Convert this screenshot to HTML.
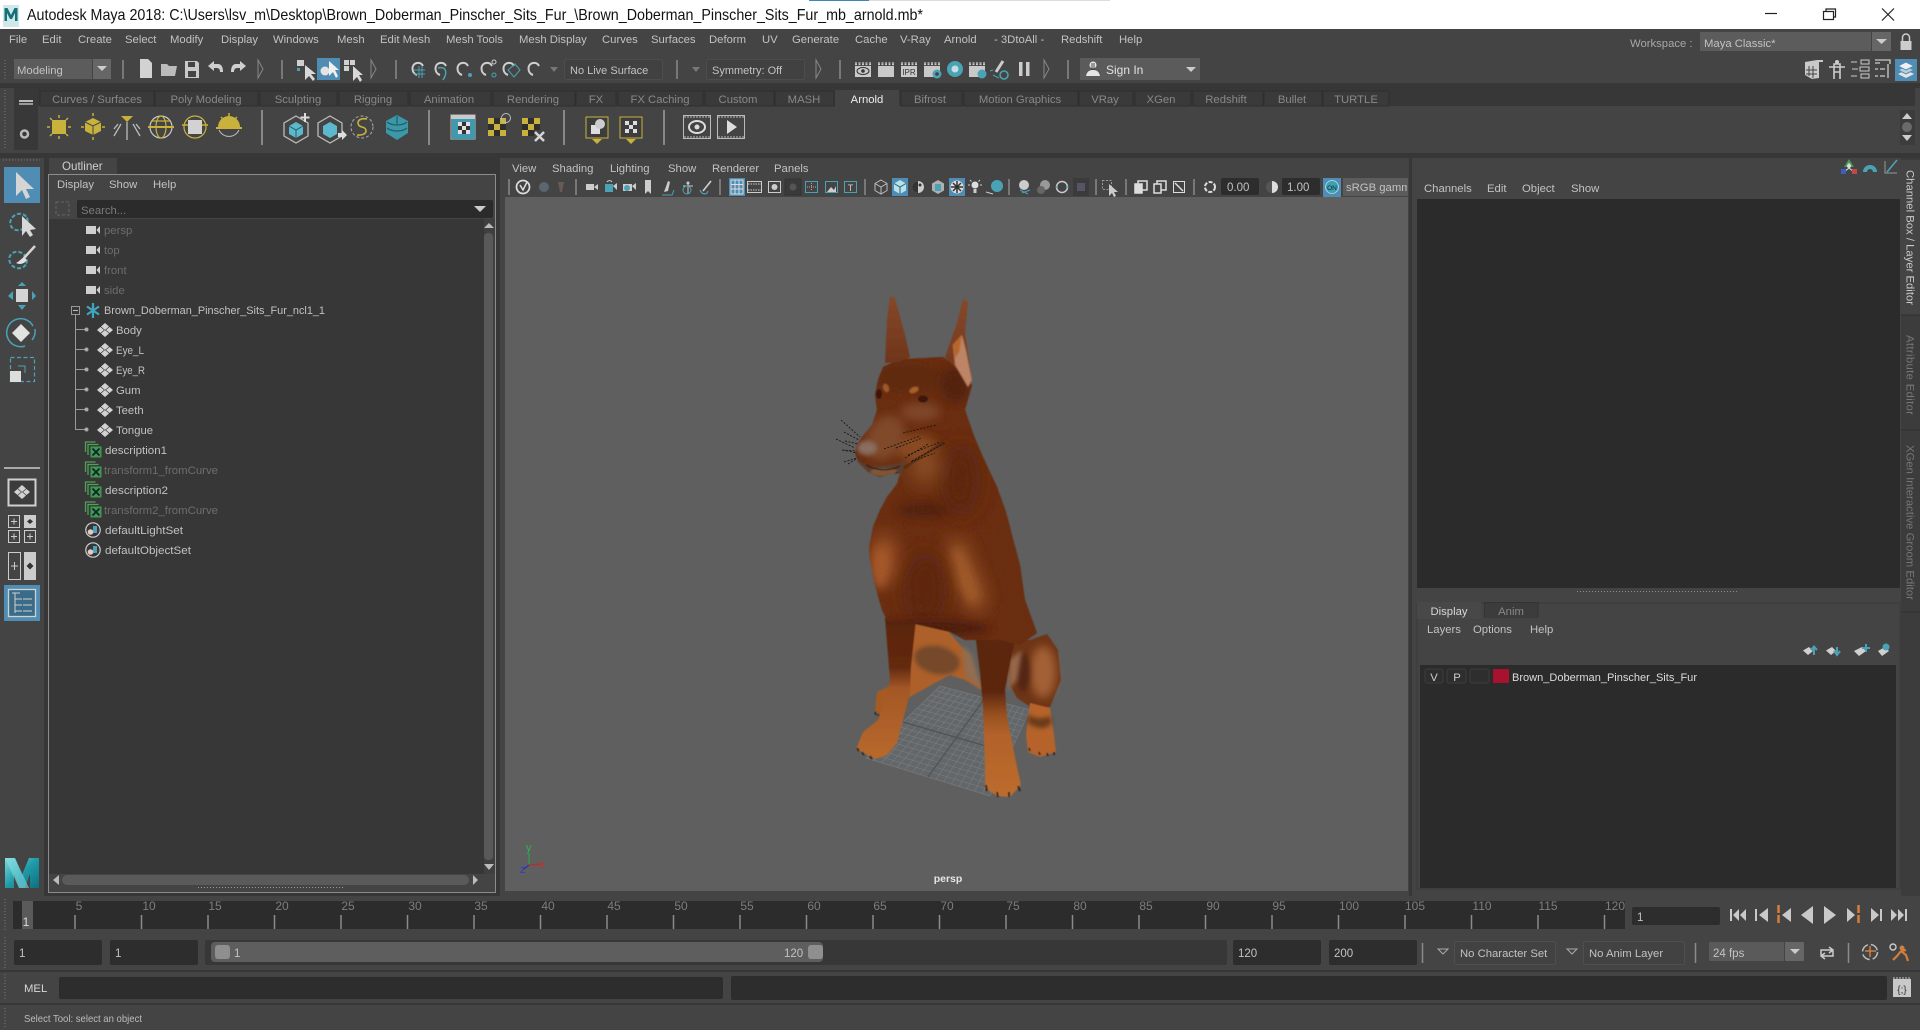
<!DOCTYPE html>
<html><head><meta charset="utf-8"><title>Autodesk Maya 2018</title>
<style>
html,body{margin:0;padding:0;width:1920px;height:1030px;overflow:hidden;background:#373737}
svg{display:block}
text{font-family:"Liberation Sans",sans-serif;font-size:11.3px;fill:#c2c2c2}
.m{text-anchor:middle}
.d{fill:#888}
.g{fill:#6d6d6d}
.w{fill:#e4e4e4}
.sp{stroke:#8a8a8a;stroke-width:1.5;fill:none}
.lg{fill:#c9c9c9}
.ol{fill:none;stroke:#c9c9c9;stroke-width:1.2}
.ye{fill:#c8b23c}
.yo{fill:none;stroke:#c8b23c;stroke-width:1.2}
.te{fill:#4aa3b5}
.to{fill:none;stroke:#4aa3b5;stroke-width:1.2}
.tick{stroke:#8a8a8a;stroke-width:1.5}
.tl{fill:#7e7e7e;font-size:12px;text-anchor:middle}
</style></head><body>
<svg xmlns="http://www.w3.org/2000/svg" width="1920" height="1030" viewBox="0 0 1920 1030">
<defs>
<linearGradient id="lg1" x1="0" y1="0" x2="1" y2="1"><stop offset="0" stop-color="#7fdbe0"/><stop offset=".5" stop-color="#1f9aa8"/><stop offset="1" stop-color="#0e6f80"/></linearGradient>
<linearGradient id="legR" x1="0" y1="0" x2="0" y2="1"><stop offset="0" stop-color="#5a2510"/><stop offset=".36" stop-color="#5c2610"/><stop offset=".5" stop-color="#98501f"/><stop offset=".62" stop-color="#b2622a"/><stop offset="1" stop-color="#bd6c2e"/></linearGradient>
<linearGradient id="legL" x1="0" y1="0" x2="0" y2="1"><stop offset="0" stop-color="#58240f"/><stop offset=".35" stop-color="#642a11"/><stop offset=".5" stop-color="#a35826"/><stop offset="1" stop-color="#b8692c"/></linearGradient>
<linearGradient id="ear" x1="0" y1="0" x2="0" y2="1"><stop offset="0" stop-color="#85482a"/><stop offset="1" stop-color="#6f351a"/></linearGradient>
<filter id="b05" x="-10%" y="-10%" width="120%" height="120%"><feGaussianBlur stdDeviation=".6"/></filter>
<filter id="b1" x="-40%" y="-40%" width="180%" height="180%"><feGaussianBlur stdDeviation="2"/></filter>
<filter id="b3" x="-80%" y="-80%" width="260%" height="260%"><feGaussianBlur stdDeviation="4.500"/></filter>
<filter id="b6" x="-100%" y="-100%" width="300%" height="300%"><feGaussianBlur stdDeviation="9"/></filter>
<filter id="noise" x="0" y="0" width="100%" height="100%"><feTurbulence type="fractalNoise" baseFrequency="0.4" numOctaves="2" seed="4"/><feColorMatrix values="0 0 0 0 .18  0 0 0 0 .07  0 0 0 0 .03  0 0 0 1.2 -.5"/></filter>
<clipPath id="torso"><path id="torsoP" d="M883,367L900,359L925,358L943,357L955,365L972,385L965,410L974,436L983,457L997,487L1006,512L1012,535L1020,565L1025,600L1037,633L1020,645L1000,640L965,640L950,632L915,624L888,622L882,610L875,585L870,560L869,548L873,527L880,510L887,497L897,484L900,473L890,474L880,477L868,472L858,462L855,453L857,445L862,437L872,425L877,410L875,395L878,380Z"/></clipPath>
<clipPath id="vp"><rect x="505" y="197" width="903" height="694"/></clipPath>
<clipPath id="srgb"><rect x="1343" y="178" width="64" height="18"/></clipPath>
<symbol id="cam" overflow="visible"><rect x="0" y="-4" width="10" height="8" fill="#cfcfcf"/><path d="M10.500 0L14 -4V4Z" fill="#cfcfcf"/></symbol>
<symbol id="tf" overflow="visible"><g fill="#d2d2d2"><path d="M8 -7L12 -3.500L8 0L4 -3.500Z"/><path d="M8 0L12 3.500L8 7L4 3.500Z"/><path d="M3.500 -3L7 0L3.500 3L0 0Z"/><path d="M12.500 -3L16 0L12.500 3L9 0Z"/></g></symbol>
<symbol id="xg" overflow="visible"><g fill="none" stroke="#4fa05a" stroke-width="1.300"><path d="M0 2V-8H10"/><path d="M2.500 5V-5.500H13"/></g><rect x="5" y="-3.500" width="11" height="11" fill="#3f9a4c"/><path d="M7 -1.500L14 5.500M14 -1.500L7 5.500" stroke="#123" stroke-width="1.800"/></symbol>
<symbol id="st" overflow="visible"><circle cx="8" cy="0" r="7.200" fill="none" stroke="#cfcfcf" stroke-width="1.200"/><path d="M8 -4L12 -4V3H8Z" fill="#4aa3b5"/><circle cx="5.500" cy="2" r="2.800" fill="#e6c8c8"/></symbol>
<symbol id="snap" overflow="visible"><path d="M5 5C-1 3 -1 -6 5 -7C8 -7.500 10 -6 11 -4" fill="none" stroke="#cfcfcf" stroke-width="2"/></symbol>
<symbol id="clap" overflow="visible"><rect x="-8" y="-4" width="16" height="11" fill="#c9c9c9"/><path d="M-8 -7H8M-8 -5.500H8" stroke="#c9c9c9" stroke-dasharray="2 1.500" stroke-width="1.200"/></symbol>
</defs>

<rect width="1920" height="1030" fill="#373737"/>
<rect width="1920" height="29" fill="#fff"/>
<rect x="809" y="0" width="60" height="1" fill="#3a88b8"/><rect x="869" y="0" width="241" height="1" fill="#dcdcdc"/>
<rect x="3" y="5" width="16" height="22" fill="#cfe8ea"/>
<path d="M4.500 21V8H7.500L11 15L14.500 8H17.500V21H15V13L12 19H10L7 13V21Z" fill="#15707c"/>
<text x="27" y="20" textLength="896" lengthAdjust="spacingAndGlyphs" style="font-size:16px;fill:#111">Autodesk Maya 2018: C:\Users\lsv_m\Desktop\Brown_Doberman_Pinscher_Sits_Fur_\Brown_Doberman_Pinscher_Sits_Fur_mb_arnold.mb*</text>
<path d="M1765 13.500H1777" stroke="#222" stroke-width="1.200"/>
<path d="M1823.500 11.500H1833.500V19.500H1823.500ZM1826 11V9H1835.500V17H1833.500" fill="none" stroke="#222" stroke-width="1.200"/>
<path d="M1882 8.500L1894 20.500M1894 8.500L1882 20.500" stroke="#222" stroke-width="1.200"/>

<rect y="29" width="1920" height="54" fill="#444"/>
<text x="9" y="43">File</text><text x="42" y="43">Edit</text><text x="78" y="43">Create</text><text x="125" y="43">Select</text><text x="170" y="43">Modify</text><text x="221" y="43">Display</text><text x="273" y="43">Windows</text><text x="337" y="43">Mesh</text><text x="380" y="43">Edit Mesh</text><text x="446" y="43">Mesh Tools</text><text x="519" y="43">Mesh Display</text><text x="602" y="43">Curves</text><text x="651" y="43">Surfaces</text><text x="709" y="43">Deform</text><text x="762" y="43">UV</text><text x="792" y="43">Generate</text><text x="855" y="43">Cache</text><text x="900" y="43">V-Ray</text><text x="944" y="43">Arnold</text><text x="994" y="43">- 3DtoAll -</text><text x="1061" y="43">Redshift</text><text x="1119" y="43">Help</text>
<text x="1630" y="47" style="fill:#a8a8a8">Workspace :</text>
<rect x="1700" y="32" width="171" height="19" fill="#5c5c5c"/><rect x="1872" y="32" width="19" height="19" fill="#666"/>
<text x="1704" y="47">Maya Classic*</text>
<path d="M1876 39H1887L1881.500 44Z" fill="#ccc"/>
<path d="M1902.500 41V37.500A3.500 3.500 0 0 1 1909.500 37.500V41" fill="none" stroke="#ccc" stroke-width="1.500"/><rect x="1900.500" y="41" width="11" height="9" fill="#ccc"/>

<path d="M5 60V80" stroke="#777" stroke-dasharray="1 2"/>
<rect x="14" y="59" width="78" height="20" fill="#5c5c5c"/><rect x="93" y="59" width="18" height="20" fill="#666"/>
<text x="17" y="74" style="font-size:11.300px">Modeling</text><path d="M97 66H107L102 71Z" fill="#ccc"/>
<path class="sp" d="M123 60V79"/>
<path d="M140 59H148L152 63V78H140Z" fill="#d2d2d2"/>
<path d="M161 76V64H167L169 66H177L175 76Z" fill="#bbb"/>
<path d="M185 61H197L199 63V78H185ZM188 62V67H195V62ZM188 71V77H196V71Z" fill="#c9c9c9" fill-rule="evenodd"/>
<path d="M208 66L214 61V64H218C222 64 223 68 223 72H220C220 69 219 68 216 68H214V71Z" fill="#cfcfcf"/>
<path d="M246 66L240 61V64H236C232 64 231 68 231 72H234C234 69 235 68 238 68H240V71Z" fill="#cfcfcf"/>
<path d="M258 60L263 69L258 78Z" fill="none" stroke="#888"/>
<path class="sp" d="M282 60V79"/>
<g><rect x="297" y="60" width="7" height="6" fill="#cfcfcf"/><rect x="297" y="68" width="3" height="3" fill="#4aa3b5"/><path d="M305 65L305 80L309 76L313 81L315 79L311 74H316Z" fill="#d8d8d8"/></g>
<rect x="317" y="58" width="23" height="22" fill="#4f8db5"/><circle cx="325" cy="71" r="4.500" fill="#e4e4e4"/><path d="M329 61L329 76L333 72L336 78L338 76L335 70H339Z" fill="#f0f0f0"/>
<g><rect x="344" y="60" width="5" height="5" fill="#d0d0d0"/><rect x="350" y="60" width="5" height="5" fill="#d0d0d0"/><rect x="344" y="66" width="5" height="5" fill="#d0d0d0"/><path d="M353 66L353 81L357 77L360 82L362 80L359 75H363Z" fill="#d8d8d8"/></g>
<path d="M371 60L376 69L371 78Z" fill="none" stroke="#888"/>
<path class="sp" d="M396 60V79"/>
<use href="#snap" x="412" y="70"/><path d="M419 66V78M414 70H425M414 74H425M422 66V78" stroke="#4aa3b5" fill="none"/>
<use href="#snap" x="435" y="70"/><path d="M438 68C446 66 448 72 443 80" stroke="#4aa3b5" fill="none" stroke-width="1.500"/>
<use href="#snap" x="457" y="70"/><circle cx="470" cy="75" r="2" fill="#4aa3b5"/>
<use href="#snap" x="481" y="70"/><circle cx="494" cy="62" r="2" fill="none" stroke="#ccc"/><circle cx="494" cy="75" r="2" fill="none" stroke="#4aa3b5"/>
<use href="#snap" x="503" y="70"/><path d="M508 70L515 64L520 70L514 77Z" fill="none" stroke="#4aa3b5"/>
<use href="#snap" x="528" y="70"/>
<path d="M550 67H558L554 72Z" fill="#777"/>
<rect x="564.500" y="59.500" width="98" height="20" rx="2" fill="#414141" stroke="#4d4d4d"/><text x="570" y="74" style="font-size:11px">No Live Surface</text>
<path class="sp" d="M677 60V79"/><path d="M692 67H700L696 72Z" fill="#777"/>
<rect x="706.500" y="59.500" width="98" height="20" rx="2" fill="#414141" stroke="#4d4d4d"/><text x="712" y="74" style="font-size:11px">Symmetry: Off</text>
<path d="M816 60L821 69L816 78Z" fill="none" stroke="#888"/>
<path class="sp" d="M840 60V79"/>
<use href="#clap" x="863" y="70"/><ellipse cx="863" cy="71" rx="6" ry="3.500" fill="none" stroke="#333"/><circle cx="863" cy="71" r="1.800" fill="#333"/>
<use href="#clap" x="886" y="70"/>
<use href="#clap" x="909" y="70"/><text x="909" y="75" class="m" style="font-size:8px;fill:#333">IPR</text>
<use href="#clap" x="932" y="70"/><circle cx="937" cy="74" r="4.500" fill="#4aa3b5"/><circle cx="937" cy="74" r="1.800" fill="#444"/>
<circle cx="955" cy="69" r="8" fill="#4aa3b5"/><circle cx="955" cy="69" r="3.500" fill="#c4dfe4"/>
<use href="#clap" x="977" y="70"/><circle cx="982" cy="74" r="4.500" fill="#4aa3b5"/>
<path d="M1003 61L996 72" stroke="#ccc" stroke-width="3"/><circle cx="1004" cy="75" r="4" fill="none" stroke="#4aa3b5" stroke-width="1.600"/><path d="M993 75L999 78M993 70L990 71" stroke="#4aa3b5"/>
<rect x="1019" y="62" width="3.500" height="14" fill="#ccc"/><rect x="1026" y="62" width="3.500" height="14" fill="#ccc"/>
<path d="M1044 60L1049 69L1044 78Z" fill="none" stroke="#888"/>
<path class="sp" d="M1068 60V79"/>
<rect x="1080" y="58" width="120" height="22" fill="#5b5b5b"/>
<circle cx="1093" cy="65" r="3.500" fill="#e6e6e6"/><path d="M1086 76C1087 71 1090 70 1093 70C1096 70 1099 71 1100 76Z" fill="#e6e6e6"/><path d="M1091 63H1095V70H1091Z" fill="#222" opacity=".4"/>
<text x="1106" y="74" style="font-size:12px;fill:#e2e2e2">Sign In</text><path d="M1186 67H1196L1191 72Z" fill="#ccc"/>
<path d="M1805 62L1817 60H1823V62H1819V78L1812 79L1805 75Z" fill="#c9c9c9"/><path d="M1809 66V76M1813 66V78M1806 70H1817M1806 74H1817" stroke="#444"/>
<circle cx="1837" cy="62" r="2" fill="#ccc"/><path d="M1829 67H1845M1834 64H1840V72H1834ZM1834 72V79M1840 72V79" stroke="#ccc" fill="none" stroke-width="1.600"/>
<path d="M1851 62H1857M1861 60H1869V64H1861ZM1852 69H1858M1860 67H1869V71H1860ZM1851 76H1857M1861 74H1869V78H1861Z" stroke="#ccc" fill="none"/>
<path d="M1875 60H1890V64M1888 64V78M1875 63H1880M1875 69H1878M1880 69H1885M1875 76H1878M1880 76H1885" stroke="#ccc" fill="none" stroke-width="1.300"/>
<rect x="1895" y="59" width="22" height="22" fill="#4f8db5"/><path d="M1898 74L1906 78L1914 74L1906 70Z" fill="#e4e4e4"/><path d="M1898 70L1906 74L1914 70L1906 66Z" fill="#bcd" stroke="#4f8db5"/><path d="M1898 66L1906 70L1914 66L1906 62Z" fill="#f0f0f0" stroke="#4f8db5"/>

<rect y="83" width="1920" height="5" fill="#373737"/>
<rect y="88" width="1920" height="65" fill="#444"/>
<rect x="14" y="88" width="1901" height="18" fill="#373737"/>
<rect x="14" y="88" width="24" height="62" fill="#383838"/>
<path d="M5 90V150" stroke="#777" stroke-dasharray="1 2"/>
<rect x="19" y="100" width="14" height="2" fill="#bbb"/><rect x="19" y="103" width="14" height="2" fill="#999"/>
<circle cx="24.500" cy="134" r="3.500" fill="none" stroke="#bbb" stroke-width="2.500"/>
<g fill="#3a3a3a" stroke="#2f2f2f">
<path d="M40 106V91H154V106Z"/><path d="M155 106V91H258V106Z"/><path d="M260 106V91H337V106Z"/><path d="M339 106V91H408V106Z"/><path d="M410 106V91H491V106Z"/><path d="M493 106V91H575V106Z"/><path d="M576 106V91H616V106Z"/><path d="M618 106V91H703V106Z"/><path d="M705 106V91H774V106Z"/><path d="M775 106V91H834V106Z"/><path d="M901 106V91H962V106Z"/><path d="M964 106V91H1078V106Z"/><path d="M1079 106V91H1133V106Z"/><path d="M1135 106V91H1191V106Z"/><path d="M1193 106V91H1263V106Z"/><path d="M1264 106V91H1322V106Z"/><path d="M1323 106V91H1389V106Z"/>
</g>
<rect x="835" y="90" width="64" height="17" fill="#444"/>
<g>
<text class="m d" x="97" y="103">Curves / Surfaces</text><text class="m d" x="206" y="103">Poly Modeling</text><text class="m d" x="298" y="103">Sculpting</text><text class="m d" x="373" y="103">Rigging</text><text class="m d" x="449" y="103">Animation</text><text class="m d" x="533" y="103">Rendering</text><text class="m d" x="596" y="103">FX</text><text class="m d" x="660" y="103">FX Caching</text><text class="m d" x="738" y="103">Custom</text><text class="m d" x="804" y="103">MASH</text><text class="m" x="867" y="103" style="fill:#eee">Arnold</text><text class="m d" x="930" y="103">Bifrost</text><text class="m d" x="1020" y="103">Motion Graphics</text><text class="m d" x="1105" y="103">VRay</text><text class="m d" x="1161" y="103">XGen</text><text class="m d" x="1226" y="103">Redshift</text><text class="m d" x="1292" y="103">Bullet</text><text class="m d" x="1356" y="103">TURTLE</text>
</g>
<rect x="52" y="120" width="14" height="14" class="ye"/><path d="M59 115V118M59 136V139M47 127H50M68 127H71M50 118L52 120M66 134L68 136M50 136L52 134M68 118L66 120" stroke="#c8b23c" stroke-width="1.500"/>
<path d="M93 118L101 122V131L93 135L85 131V122Z" class="ye"/><path d="M85 122L93 126L101 122M93 126V135" stroke="#444" fill="none"/><path d="M93 113V116M93 137V140M81 127H84M102 127H105" stroke="#c8b23c" stroke-width="1.500"/>
<path d="M121 116H133L127 122Z" class="ye"/><path d="M127 122V140M121 124L114 136M133 124L140 136M118 124L114 129M136 124L140 129" stroke="#bbb" stroke-width="1.300" fill="none"/>
<circle cx="161" cy="127" r="11" class="ol" stroke="#bbb"/><ellipse cx="161" cy="127" rx="5" ry="11" class="yo"/><path d="M148 127H174" stroke="#c8b23c" stroke-width="2"/><path d="M151 121H171" class="yo"/>
<circle cx="195" cy="127" r="11" class="yo"/><path d="M182 125H208" stroke="#c8b23c" stroke-width="1.500"/><rect x="188" y="120" width="14" height="14" fill="#d2d2d2"/>
<path d="M218 127A11 11 0 0 1 240 127Z" class="ye"/><path d="M216 128H242" stroke="#c8b23c" stroke-width="2"/><path d="M219 130A11 11 0 0 0 239 130" fill="none" stroke="#bbb"/><path d="M229 113V116M221 117L223 119M237 117L235 119" stroke="#c8b23c" stroke-width="1.500"/>
<path style="stroke-width:2;stroke:#888;fill:none" d="M262 110V145"/>
<path d="M296 116L308 123V136L296 143L284 136V123Z" fill="none" stroke="#bbb" stroke-width="1.300"/><path d="M296 122L303 126V134L296 138L289 134V126Z" fill="#5cb8cc"/><path d="M289 126L296 130L303 126M296 130V138" stroke="#2b5f6b" fill="none"/><path d="M305 113V122M300.500 117.500H309.500" stroke="#ddd" stroke-width="2"/>
<path d="M330 116L342 123V136L330 143L318 136V123Z" fill="none" stroke="#bbb" stroke-width="1.300"/><path d="M330 122L337 126V134L330 138L323 134V126Z" fill="#5cb8cc"/><path d="M338 133H342V130L347 135L342 140V137H338Z" fill="#ddd"/>
<circle cx="362" cy="127" r="11" fill="none" stroke="#aaa" stroke-dasharray="3 2"/><path d="M367 119C356 117 356 126 362 127C368 128 368 136 357 135" fill="none" stroke="#c8b23c" stroke-width="1.600"/>
<path d="M397 115L408 121V133L397 140L386 133V121Z" fill="#3c97a8"/><path d="M387 122C392 126 402 126 407 122M387 128C392 132 402 132 407 128M397 116V124" stroke="#1f5c68" fill="none" stroke-width="1.200"/>
<path style="stroke-width:2;stroke:#888;fill:none" d="M429 110V145"/>
<rect x="451" y="115" width="24" height="24" fill="none" stroke="#bbb"/><rect x="452" y="118" width="23" height="21" fill="#3f9ab0"/><rect x="451" y="115" width="24" height="4" fill="#c9c9c9"/><g fill="#e0e0e0"><rect x="458" y="122" width="4" height="4"/><rect x="466" y="122" width="4" height="4"/><rect x="462" y="126" width="4" height="4"/><rect x="458" y="130" width="4" height="4"/><rect x="466" y="130" width="4" height="4"/></g><g fill="#333"><rect x="462" y="122" width="4" height="4"/><rect x="458" y="126" width="4" height="4"/><rect x="466" y="126" width="4" height="4"/><rect x="462" y="130" width="4" height="4"/></g>
<g class="ye"><rect x="488" y="118" width="6" height="6"/><rect x="500" y="118" width="6" height="6"/><rect x="494" y="124" width="6" height="6"/><rect x="488" y="130" width="6" height="6"/><rect x="500" y="130" width="6" height="6"/></g><g fill="#2e2e2e"><rect x="494" y="118" width="6" height="6"/><rect x="488" y="124" width="6" height="6"/><rect x="500" y="124" width="6" height="6"/><rect x="494" y="130" width="6" height="6"/></g><circle cx="506" cy="118" r="4.500" fill="none" stroke="#bbb"/>
<g class="ye"><rect x="522" y="118" width="6" height="6"/><rect x="534" y="118" width="6" height="6"/><rect x="528" y="124" width="6" height="6"/><rect x="522" y="130" width="6" height="6"/></g><g fill="#2e2e2e"><rect x="528" y="118" width="6" height="6"/><rect x="522" y="124" width="6" height="6"/><rect x="534" y="124" width="6" height="6"/><rect x="528" y="130" width="6" height="6"/></g><path d="M535 132L544 141M544 132L535 141" stroke="#d5d5d5" stroke-width="2.500"/>
<path style="stroke-width:2;stroke:#888;fill:none" d="M564 110V145"/>
<rect x="586" y="117" width="22" height="21" fill="#3d3d3d" stroke="#c8b23c"/><rect x="591" y="125" width="9" height="9" fill="#ddd"/><circle cx="600" cy="124" r="5" fill="#ccc"/><path d="M592 139H602L597 144Z" fill="#c8b23c"/>
<rect x="620" y="117" width="22" height="21" fill="#3d3d3d" stroke="#c8b23c"/><g fill="#ddd"><rect x="625" y="121" width="4" height="4"/><rect x="633" y="121" width="4" height="4"/><rect x="629" y="125" width="4" height="4"/><rect x="625" y="129" width="4" height="4"/><rect x="633" y="129" width="4" height="4"/></g><path d="M626 139H636L631 144Z" fill="#c8b23c"/>
<path style="stroke-width:2;stroke:#888;fill:none" d="M664 110V145"/>
<rect x="683.500" y="115.500" width="27" height="23" fill="none" stroke="#bbb"/><path d="M684 117H710M684 137H710" stroke="#bbb" stroke-dasharray="2 1"/><ellipse cx="697" cy="127" rx="8" ry="6" fill="none" stroke="#ddd" stroke-width="2"/><circle cx="697" cy="127" r="2.500" fill="#ddd"/>
<rect x="717.500" y="115.500" width="27" height="23" fill="none" stroke="#bbb"/><path d="M718 117H744M718 137H744" stroke="#bbb" stroke-dasharray="2 1"/><path d="M727 120V134L737 127Z" fill="#ddd"/>
<rect x="1900" y="110" width="15" height="35" fill="#3c3c3c"/><path d="M1902 119H1912L1907 113Z" fill="#ccc"/><circle cx="1907" cy="127" r="5" fill="#6a6a6a"/><path d="M1902 135H1912L1907 141Z" fill="#ccc"/>

<rect y="153" width="1920" height="5" fill="#373737"/>
<rect x="0" y="158" width="44" height="740" fill="#444"/>
<path d="M3 160H40" stroke="#777" stroke-dasharray="1 2"/>
<rect x="4" y="167" width="36" height="36" fill="#4f8db5"/><path d="M16 172V196L22 190L26 199L30 197L26 189L34 189Z" fill="#d5d5d5"/>
<ellipse cx="19" cy="222" rx="9" ry="8" fill="none" stroke="#4aa3b5" stroke-width="2" stroke-dasharray="4 2" transform="rotate(-30 19 222)"/><path d="M22 216V236L26 231L30 237L33 235L30 230L36 229Z" fill="#d8d8d8"/>
<ellipse cx="18" cy="260" rx="9" ry="8" fill="none" stroke="#4aa3b5" stroke-width="2" stroke-dasharray="4 2" transform="rotate(30 18 260)"/><path d="M35 246L24 258" stroke="#d5d5d5" stroke-width="2.500"/><path d="M16 263C20 261 22 258 24 257L27 260C24 264 20 265 16 263Z" fill="#e0e0e0"/>
<rect x="16" y="289" width="12" height="13" fill="#d5d5d5"/><g fill="#4aa3b5"><path d="M18 286H26L22 282Z"/><path d="M18 305H26L22 310Z"/><path d="M13 291V300L8 296Z"/><path d="M32 291V300L36 296Z"/></g>
<path d="M21 324L30 333L21 342L12 333Z" fill="#e2e2e2"/><path d="M33 326A14 14 0 1 0 25 346" fill="none" stroke="#4aa3b5" stroke-width="1.500"/><path d="M35 329A14 14 0 0 1 32 340" fill="none" stroke="#4aa3b5" stroke-width="1.500"/>
<rect x="10.500" y="357.500" width="24" height="24" fill="none" stroke="#4aa3b5" stroke-dasharray="4 2.500" stroke-width="1.200"/><rect x="10" y="371" width="11" height="11" fill="#ddd"/><path d="M18 366H25V373" stroke="#4aa3b5" fill="none"/>
<rect x="4" y="467" width="36" height="2" fill="#aaa"/>
<rect x="8.500" y="479.500" width="27" height="26" fill="#3c3c3c" stroke="#d0d0d0" stroke-width="2"/><use href="#tf" x="14" y="492"/>
<g fill="none" stroke="#ccc"><rect x="8.500" y="515.500" width="11" height="12"/><rect x="8.500" y="530.500" width="11" height="12"/><rect x="24.500" y="530.500" width="11" height="12"/></g><rect x="24" y="515" width="12" height="13" fill="#ccc"/><path d="M11 521.500H17M14 518.500V524.500M11 536.500H17M14 533.500V539.500M27 536.500H33M30 533.500V539.500" stroke="#ccc"/><path d="M30 519L33 521.500L30 524L27 521.500Z" fill="#333"/>
<rect x="8.500" y="552.500" width="12" height="27" fill="none" stroke="#ccc"/><rect x="24" y="552" width="12" height="28" fill="#ccc"/><path d="M11 566H18M14.500 562V570" stroke="#ccc"/><path d="M30 562.500L33.500 566L30 569.500L26.500 566Z" fill="#333"/>
<rect x="4" y="585" width="36" height="36" fill="#4f8db5"/><rect x="8.500" y="589.500" width="27" height="27" fill="#3a6b88" stroke="#d0d0d0" stroke-width="1.300"/><path d="M12 593H20M15 593V613M15 599H22M15 605H22M15 611H22M23 599H32M23 605H32M23 611H32" stroke="#d0d0d0" fill="none"/>
<path d="M5 858H15L22 875L29 858H39V888H30V874L25 888H19L14 874V888H5Z" fill="url(#lg1)"/>
<path d="M5 858H15L29 888H19Z" fill="#8be0e4" opacity=".55"/>

<rect x="44" y="158" width="456" height="740" fill="#373737"/>
<path d="M49 174V158H117V174" fill="#444"/>
<text x="62" y="170" style="font-size:11.600px;fill:#d0d0d0">Outliner</text>
<rect x="48.500" y="174.500" width="447" height="718" fill="#444" stroke="#8c8c8c"/>
<text x="57" y="188">Display</text><text x="109" y="188">Show</text><text x="153" y="188">Help</text>
<rect x="56" y="202" width="13" height="13" fill="none" stroke="#666" stroke-dasharray="3 2"/>
<rect x="77" y="200" width="416" height="18" rx="2" fill="#2b2b2b"/>
<text x="81" y="214" style="fill:#7b7b7b">Search...</text><path d="M474 206H486L480 212Z" fill="#ccc"/>
<rect x="49" y="219" width="446" height="655" fill="#373737"/>
<rect x="484" y="219" width="11" height="655" fill="#3f3f3f"/>
<rect x="484" y="233" width="9" height="627" rx="4" fill="#595959"/>
<path d="M484 228H494L489 223Z" fill="#bbb"/><path d="M484 864H494L489 870Z" fill="#bbb"/>
<rect x="49" y="874" width="446" height="18" fill="#444"/>
<rect x="62" y="875" width="407" height="10" rx="5" fill="#5a5a5a"/>
<path d="M59 875V885L53 880Z" fill="#bbb"/><path d="M473 875V885L478 880Z" fill="#bbb"/>
<path d="M198 887.500H343" stroke="#999" stroke-dasharray="1 2"/>

<use href="#cam" x="86" y="230"/><use href="#cam" x="86" y="250"/><use href="#cam" x="86" y="270"/><use href="#cam" x="86" y="290"/>
<text class="g" x="104" y="234">persp</text><text class="g" x="104" y="254">top</text><text class="g" x="104" y="274">front</text><text class="g" x="104" y="294">side</text>
<rect x="71.500" y="306.500" width="8" height="8" fill="none" stroke="#999"/><path d="M73 310.500H78" stroke="#bbb"/>
<path d="M93 303V318M87 306.500L99 314.500M99 306.500L87 314.500" stroke="#3ea7bd" stroke-width="2.200"/>
<text x="104" y="314" textLength="221" lengthAdjust="spacingAndGlyphs">Brown_Doberman_Pinscher_Sits_Fur_ncl1_1</text>
<path d="M75.500 315V429.500H86M76 329.500H86M76 349.500H86M76 369.500H86M76 389.500H86M76 409.500H86" stroke="#999" fill="none"/>
<g fill="#aaa"><circle cx="86.500" cy="329.500" r="2"/><circle cx="86.500" cy="349.500" r="2"/><circle cx="86.500" cy="369.500" r="2"/><circle cx="86.500" cy="389.500" r="2"/><circle cx="86.500" cy="409.500" r="2"/><circle cx="86.500" cy="429.500" r="2"/></g>
<use href="#tf" x="97" y="330"/><use href="#tf" x="97" y="350"/><use href="#tf" x="97" y="370"/><use href="#tf" x="97" y="390"/><use href="#tf" x="97" y="410"/><use href="#tf" x="97" y="430"/>
<text x="116" y="334">Body</text><text x="116" y="354" textLength="28" lengthAdjust="spacingAndGlyphs">Eye_L</text><text x="116" y="374" textLength="29" lengthAdjust="spacingAndGlyphs">Eye_R</text><text x="116" y="394">Gum</text><text x="116" y="414">Teeth</text><text x="116" y="434">Tongue</text>
<use href="#xg" x="85.500" y="450"/><use href="#xg" x="85.500" y="470"/><use href="#xg" x="85.500" y="490"/><use href="#xg" x="85.500" y="510"/>
<text x="105" y="454" textLength="62" lengthAdjust="spacingAndGlyphs">description1</text><text class="g" x="104" y="474" textLength="114" lengthAdjust="spacingAndGlyphs">transform1_fromCurve</text><text x="105" y="494" textLength="63" lengthAdjust="spacingAndGlyphs">description2</text><text class="g" x="104" y="514" textLength="114" lengthAdjust="spacingAndGlyphs">transform2_fromCurve</text>
<use href="#st" x="85" y="530"/><use href="#st" x="85" y="550"/>
<text x="105" y="534" textLength="78" lengthAdjust="spacingAndGlyphs">defaultLightSet</text><text x="105" y="554" textLength="86" lengthAdjust="spacingAndGlyphs">defaultObjectSet</text>

<rect x="500" y="158" width="909" height="738" fill="#444"/>
<text x="512" y="172">View</text><text x="552" y="172">Shading</text><text x="610" y="172">Lighting</text><text x="668" y="172">Show</text><text x="712" y="172">Renderer</text><text x="774" y="172">Panels</text>
<g class="sp"><path d="M509 179V195M576 179V195M720 179V195M865 179V195M1009 179V195M1096 179V195M1126 179V195M1194 179V195"/></g>
<circle cx="523" cy="187" r="6.500" fill="none" stroke="#ddd" stroke-width="1.700"/><path d="M520 185L523 190L527 182" fill="none" stroke="#ddd" stroke-width="1.500"/>
<circle cx="544" cy="187" r="5" fill="#5a6670"/><path d="M558 182H564L562 192H560Z" fill="#6a5a55"/>
<rect x="586" y="184" width="8" height="6" fill="#ccc"/><path d="M594 187L598 184V190Z" fill="#ccc"/>
<rect x="605" y="184" width="8" height="8" fill="#4aa3b5"/><path d="M607 182A3 3 0 0 1 612 182" stroke="#ccc" fill="none"/><path d="M613 186L617 183V190Z" fill="#ccc"/>
<rect x="623" y="184" width="9" height="7" fill="#ccc"/><circle cx="627" cy="188" r="3" fill="#4aa3b5"/><path d="M632 186L636 183V190Z" fill="#ccc"/>
<path d="M645 180H651V194L648 191L645 194Z" fill="#ccc"/>
<path d="M664 192L668 181L670 182L668 191" fill="#ccc"/><path d="M662 195H672L674 190" fill="none" stroke="#4aa3b5"/>
<circle cx="688" cy="183" r="1.500" fill="#ccc"/><path d="M688 182V194M683 186H693" stroke="#ccc"/><circle cx="687" cy="190" r="4" fill="none" stroke="#4aa3b5"/>
<path d="M711 181L703 191" stroke="#ccc" stroke-width="1.700"/><path d="M700 190C702 195 707 195 708 191" fill="none" stroke="#4aa3b5" stroke-width="1.200"/>
<rect x="729" y="178" width="16" height="18" fill="#4f8db5"/><rect x="731" y="180" width="12" height="14" fill="none" stroke="#ddd"/><path d="M731 184.500H743M731 189H743M735 180V194M739 180V194" stroke="#ddd"/>
<rect x="747.500" y="181.500" width="14" height="11" fill="none" stroke="#ccc"/><path d="M748 184H761M748 190H761" stroke="#ccc" stroke-dasharray="1.500 1"/>
<rect x="768.500" y="181.500" width="12" height="11" fill="none" stroke="#ccc"/><circle cx="774.500" cy="187" r="3" fill="#ccc"/>
<rect x="785" y="179" width="16" height="16" fill="#3a3a3a" stroke="#333"/><circle cx="793" cy="187" r="3.500" fill="#555"/>
<rect x="805.500" y="181.500" width="12" height="11" fill="none" stroke="#4aa3b5"/><path d="M807 187H816M811.500 183V191" stroke="#aaa" stroke-dasharray="1 1"/>
<rect x="825.500" y="181.500" width="12" height="11" fill="none" stroke="#4aa3b5"/><path d="M827 192L831 187L834 190L836 186V192Z" fill="#ccc"/>
<rect x="844.500" y="181.500" width="12" height="11" fill="none" stroke="#4aa3b5"/><text x="850.500" y="191" class="m" style="font-size:9px;fill:#ccc">T</text>
<path d="M881 180L887 183.500V190.500L881 194L875 190.500V183.500ZM875 183.500L881 187L887 183.500M881 187V194" fill="none" stroke="#bbb"/>
<rect x="892" y="178" width="16" height="18" fill="#4f8db5"/><path d="M900 180L906 183.500V190.500L900 194L894 190.500V183.500Z" fill="#b7e2ec"/><path d="M894 183.500L900 187L906 183.500M900 187V194" fill="none" stroke="#2b5f6b"/>
<circle cx="918" cy="187" r="6" fill="#ccc"/><path d="M918 181A6 6 0 0 0 918 193Z" fill="#333"/><circle cx="920" cy="185" r="1.500" fill="#333"/>
<path d="M938 180L944 183.500V190.500L938 194L932 190.500V183.500Z" fill="#b0b0b0"/><rect x="935" y="184" width="6" height="7" fill="#4aa3b5"/>
<rect x="949" y="178" width="16" height="18" fill="#4f8db5"/><circle cx="957" cy="187" r="6.500" fill="#ddd"/><path d="M953 183L961 191M961 183L953 191M957 181V193M951 187H963" stroke="#333" stroke-width="1.500"/>
<circle cx="975" cy="185" r="3.500" fill="#ddd"/><rect x="973.500" y="189" width="3" height="4" fill="#ccc"/><path d="M968 185H970M980 185H982M970 180L971.500 181.500M980 180L978.500 181.500" stroke="#ccc"/>
<circle cx="997" cy="186" r="6" fill="#4aa3b5"/><path d="M986 192L993 194" stroke="#ccc"/>
<circle cx="1024" cy="185" r="5" fill="#ccc"/><path d="M1020 190L1028 194M1022 193L1030 190" stroke="#4aa3b5"/>
<circle cx="1045" cy="185" r="5" fill="#999"/><circle cx="1041" cy="190" r="4" fill="#666"/>
<circle cx="1062" cy="187" r="5.500" fill="none" stroke="#ccc" stroke-width="1.500"/><path d="M1056 187H1058M1066 187H1068" stroke="#4aa3b5" stroke-width="1.500"/>
<rect x="1073" y="178" width="16" height="18" fill="#3b3b3b"/><rect x="1077" y="183" width="8" height="8" fill="#556"/>
<rect x="1102.500" y="180.500" width="9" height="9" fill="none" stroke="#999" stroke-dasharray="2 1.500"/><path d="M1109 184V196L1112 193L1114 197L1116 196L1114 192L1118 192Z" fill="#ccc"/>
<path d="M1135 184H1142V193H1135ZM1138 184V181H1147V190H1142" fill="none" stroke="#ddd" stroke-width="1.500"/><rect x="1135" y="184" width="7" height="9" fill="#ddd"/>
<path d="M1154 184H1161V193H1154ZM1157 184V181H1166V190H1161" fill="none" stroke="#ddd" stroke-width="1.500"/>
<rect x="1173.500" y="181.500" width="11" height="11" fill="none" stroke="#ddd"/><path d="M1175 183L1183 191" stroke="#ddd" stroke-width="1.500"/>
<circle cx="1210" cy="187" r="5" fill="none" stroke="#ddd" stroke-width="2" stroke-dasharray="4 1.500"/>
<rect x="1221" y="178" width="38" height="17" rx="2" fill="#2d2d2d"/><text x="1227" y="191" style="font-size:11.500px">0.00</text>
<path d="M1272 181V193A6 6 0 0 0 1272 181Z" fill="#ddd"/><path d="M1272 181V193A6 6 0 0 1 1272 181Z" fill="#555"/>
<rect x="1282" y="178" width="38" height="17" rx="2" fill="#2d2d2d"/><text x="1287" y="191" style="font-size:11.500px">1.00</text>
<rect x="1323" y="178" width="18" height="19" fill="#4f8db5"/><circle cx="1332" cy="187" r="6.500" fill="#3fa0b0" stroke="#bde" stroke-width=".8"/><text x="1332" y="190" class="m" style="font-size:6.500px;fill:#123">ON</text>
<rect x="1343" y="178" width="65" height="18" fill="#5c5c5c"/>
<text x="1346" y="191" clip-path="url(#srgb)" style="font-size:11.300px">sRGB gamma</text>

<rect x="505" y="197" width="903" height="694" fill="#5f5f5f"/>
<g clip-path="url(#vp)">
<path d="M940 686L1030 710L990 796L866 758Z" fill="#646769"/>
<g stroke="#747a7e" stroke-width=".7" fill="none">
<path d="M940 686L866 758M945.600 687.500L873.800 760.400M951.300 689L881.500 762.800M956.900 690.500L889.300 765.100M962.500 692L897 767.500M968.100 693.500L904.800 769.900M973.800 695L912.500 772.300M979.400 696.500L920.300 774.600M990.600 699.500L935.800 779.400M996.300 701L943.500 781.800M1001.900 702.500L951.300 784.100M1007.500 704L959 786.500M1013.100 705.500L966.800 788.900M1018.800 707L974.500 791.300M1024.400 708.500L982.300 793.600M1030 710L990 796"/>
<path d="M940 686L1030 710M935.400 690.500L1027.500 715.400M930.800 695L1025 720.800M926.100 699.500L1022.500 726.100M921.500 704L1020 731.500M916.900 708.500L1017.500 736.900M912.300 713L1015 742.300M907.600 717.500L1012.500 747.600M898.400 726.500L1007.500 758.400M893.800 731L1005 763.800M889.100 735.500L1002.500 769.100M884.500 740L1000 774.500M879.900 744.500L997.500 779.900M875.300 749L995 785.300M870.600 753.500L992.500 790.600M866 758L990 796"/>
</g>
<path d="M985 698L928 777M903 722L1010 753" stroke="#4e5358" stroke-width="1.200"/>

<g filter="url(#b05)">
<path d="M877 692L890 686L892 712L880 716L875 710Z" fill="#a65a24"/>
<path d="M875 712l1 3M878 714l1 2" stroke="#222" stroke-width="1.500"/>
<path d="M915 620L947 630L967 653L982 690L965 680L950 675L933 684L908 698L905 660Z" fill="#ad6029"/>
<ellipse cx="937" cy="660" rx="23" ry="14" fill="#75492c" filter="url(#b1)" transform="rotate(12 937 660)"/>
<path d="M962 645L972 655L982 690L966 676Z" fill="#8f6e52" filter="url(#b1)"/>
<path d="M1005 640L1030 640L1047 634L1058 650L1061 680L1050 707L1032 708L1017 698L1010 685L1008 660Z" fill="#6d3415"/>
<ellipse cx="1043" cy="672" rx="13" ry="26" fill="#a36035" filter="url(#b3)"/>
<ellipse cx="1023" cy="672" rx="7" ry="20" fill="#552812" filter="url(#b1)"/>
<path d="M1009 660L1022 650L1017 680L1008 690Z" fill="#96684a" filter="url(#b1)"/>
<path d="M1030 703L1050 708L1054 735L1056 752L1040 757L1028 752L1026 735Z" fill="#b5632a"/>
<path d="M1027 722C1036 730 1048 730 1052 722L1050 716C1040 720 1033 718 1029 714Z" fill="#6a3a1a" filter="url(#b1)"/>
<g stroke="#222" stroke-width="1.700"><path d="M1029 748l1 3M1039 752l1 3M1047 753l1 3M1054 752l0 3"/></g>
<path d="M885 618L916 620L911 667L910 693L897 743L887 755L875 759L856 749L863 732L878 720L890 680Z" fill="url(#legL)"/>
<path d="M857 748l2 3M862 752l2 3M870 756l2 3" stroke="#222" stroke-width="1.800"/>
<path d="M975 632L1018 632L1012 653L1005 690L1007 717L1017 767L1021 785L1010 797L997 796L985 788L985 767L983 707L980 673Z" fill="url(#legR)"/>
<g stroke="#222" stroke-width="1.800"><path d="M986 785l1 6M997 792l1 5M1009 792l0 5M1018 786l2 5"/></g>

<use href="#torsoP" fill="#672b10"/>
<g clip-path="url(#torso)">
<rect x="850" y="350" width="190" height="300" fill="#6a2d11"/>
<ellipse cx="884" cy="560" rx="12" ry="26" fill="#a85a2b" filter="url(#b6)"/>
<ellipse cx="880" cy="568" rx="7" ry="20" fill="#a85a2b" filter="url(#b3)"/>
<path d="M948 540L962 540L985 595L978 618L960 590Z" fill="#a35c2b" filter="url(#b6)"/>
<path d="M952 550L960 550L978 595L972 605L960 585Z" fill="#a35c2b" filter="url(#b3)"/>
<ellipse cx="925" cy="510" rx="28" ry="8" fill="#53220f" filter="url(#b3)"/>
<ellipse cx="960" cy="480" rx="20" ry="36" fill="#5d2710" filter="url(#b6)"/>
<ellipse cx="925" cy="590" rx="22" ry="38" fill="#5d2710" filter="url(#b6)"/>
<ellipse cx="930" cy="628" rx="60" ry="8" fill="#4c1f0d" filter="url(#b3)"/>
<ellipse cx="925" cy="465" rx="15" ry="20" fill="#8a4e25" filter="url(#b6)"/>
<ellipse cx="915" cy="447" rx="20" ry="12" fill="#8a4c22" filter="url(#b3)"/>
<ellipse cx="912" cy="378" rx="38" ry="14" fill="#5f2911" filter="url(#b3)"/>
<ellipse cx="955" cy="385" rx="14" ry="18" fill="#52230f" filter="url(#b3)"/>
<ellipse cx="920" cy="412" rx="20" ry="9" fill="#80462a" filter="url(#b3)"/>
<ellipse cx="885" cy="438" rx="18" ry="24" fill="#80482c" filter="url(#b3)" transform="rotate(30 885 438)"/>
<ellipse cx="886" cy="388" rx="3" ry="4.500" fill="#a05a2a" filter="url(#b05)" transform="rotate(-20 886 388)"/>
<ellipse cx="914" cy="390" rx="5" ry="3" fill="#a8622a" filter="url(#b05)" transform="rotate(-25 914 390)"/>
<ellipse cx="923" cy="399" rx="5" ry="3.500" fill="#3b1309"/>
<ellipse cx="879" cy="394" rx="3" ry="5" fill="#3b1309"/>
<ellipse cx="867" cy="448" rx="10" ry="7" fill="#8a7063" filter="url(#b1)"/>
<path d="M855 457C862 463 868 467 878 466C886 464 895 466 905 460L902 475L885 480L865 476Z" fill="#5b3c2d" filter="url(#b05)"/>
<ellipse cx="884" cy="472" rx="14" ry="4" fill="#805636" filter="url(#b05)"/>
<path d="M866 465C875 470 888 472 900 466" stroke="#2a140a" stroke-width="1.200" fill="none"/>
<path d="M868 477C878 481 886 480 898 472" stroke="#1b0c06" stroke-width="1.200" fill="none"/>
<path d="M904 468L944 442" stroke="#3f2611" stroke-width="2" fill="none" filter="url(#b05)" opacity=".7"/>
<rect x="850" y="350" width="190" height="300" filter="url(#noise)" opacity=".3"/>
</g>
<path d="M885 363L887 320L890 296L895 298L905 335L910 357L898 362Z" fill="url(#ear)"/>
<path d="M945 357L957 323L963 299L968 302L965 333L972 380L968 388L958 370Z" fill="url(#ear)"/>
<path d="M953 345L962 335L966 350L972 380L968 387L955 365Z" fill="#bd8466" filter="url(#b05)"/>
<path d="M953 345L962 335L959 352L955 358Z" fill="#b8652a" filter="url(#b05)"/>
</g>
<g stroke="#111" stroke-width=".8" fill="none" stroke-dasharray="2 1.500">
<path d="M841 420L860 437M844 432L859 440M845 441L858 444M836 439L855 448M842 450L856 451M843 450L857 453M844 462L857 458M848 464L856 459"/>
<path d="M903 433L936 425M896 448L922 438M884 449L920 436M908 455L940 442M911 462L935 453M905 458L928 444M912 461L945 443"/>
</g>
<path d="M529 865V853" stroke="#2fa04a" stroke-width="1.200"/><path d="M529 865L541 864" stroke="#c42828" stroke-width="1.200"/><path d="M529 865L524 869" stroke="#2432c0" stroke-width="1.200"/>
<text x="526" y="851" style="fill:#35b04a;font-size:11px">y</text><text x="539" y="868" style="fill:#d02c2c;font-size:11px">x</text><text x="520" y="873" style="fill:#2a38d0;font-size:11px">z</text>
<text x="948" y="882" class="m" style="font-weight:bold;fill:#e6e6e6;font-size:10.500px">persp</text>
</g>

<rect x="1412" y="158" width="508" height="738" fill="#444"/>
<path d="M1849 159L1854 167L1844 167Z" fill="#4a9a5a"/><path d="M1849 163V168M1849 168L1844 172M1849 168L1854 172" stroke="#ddd"/><rect x="1841" y="169" width="5" height="5" fill="#3a5fc0"/><rect x="1852" y="169" width="5" height="5" fill="#c04848"/><circle cx="1849" cy="166" r="2" fill="#ddd"/>
<path d="M1863 172A7 7 0 1 1 1877 172L1873 172A3 3 0 0 0 1867 172Z" fill="#4aa3b5"/>
<path d="M1885 161V173H1897" stroke="#999" fill="none"/><path d="M1887 172L1897 160" stroke="#4aa3b5" stroke-width="1.600"/>
<text x="1424" y="192">Channels</text><text x="1487" y="192">Edit</text><text x="1522" y="192">Object</text><text x="1571" y="192">Show</text>
<rect x="1417" y="199" width="483" height="389" fill="#2b2b2b"/>
<path d="M1577 591.500H1737" stroke="#8a8a8a" stroke-dasharray="1 2"/>
<rect x="1417" y="603" width="483" height="286" fill="#444" stroke="#3a3a3a"/>
<rect x="1417" y="602" width="64" height="17" fill="#484848"/>
<path d="M1484.500 618V602.500H1538V618" fill="#3c3c3c" stroke="#333"/>
<text x="1449" y="615" class="m" style="fill:#d8d8d8">Display</text><text x="1511" y="615" class="m d">Anim</text>
<text x="1427" y="633">Layers</text><text x="1473" y="633">Options</text><text x="1530" y="633">Help</text>
<path d="M1803 650.500L1809 647L1813 651L1808 655Z" fill="#d0d0d0"/><path d="M1814 655V648M1811 650L1814 646.500L1817 650" stroke="#4aa3b5" fill="none" stroke-width="2"/>
<path d="M1826 650.500L1832 647L1836 651L1831 655Z" fill="#d0d0d0"/><path d="M1837 647V654M1834 651L1837 655L1840 651" stroke="#4aa3b5" fill="none" stroke-width="2"/>
<path d="M1854 651L1862 647L1866 651L1859 656Z" fill="#d0d0d0"/><path d="M1866 644V652M1862 648H1870" stroke="#4aa3b5" stroke-width="2"/>
<path d="M1878 651L1885 647L1889 651L1882 656Z" fill="#d0d0d0"/><circle cx="1886" cy="647" r="3.500" fill="#4aa3b5"/>
<rect x="1420" y="665" width="476" height="223" fill="#2b2b2b"/>
<rect x="1425" y="669" width="18" height="14" rx="2" fill="#2e2e2e" stroke="#3c3c3c"/><rect x="1447" y="669" width="19" height="14" rx="2" fill="#2e2e2e" stroke="#3c3c3c"/><rect x="1470" y="669" width="19" height="14" rx="2" fill="#2e2e2e" stroke="#3c3c3c"/>
<text x="1434" y="681" class="m" style="fill:#ccc">V</text><text x="1457" y="681" class="m" style="fill:#ccc">P</text>
<rect x="1493" y="669" width="16" height="14" rx="1" fill="#a8122f"/>
<text x="1512" y="681" textLength="185" lengthAdjust="spacingAndGlyphs" style="fill:#dcdcdc">Brown_Doberman_Pinscher_Sits_Fur</text>
<rect x="1901" y="158" width="19" height="738" fill="#3c3c3c"/>
<rect x="1901" y="160" width="19" height="155" fill="#444"/>
<path d="M1901 315H1920M1901 430H1920M1901 612H1920" stroke="#2f2f2f"/>
<text transform="translate(1906.500,170) rotate(90)" textLength="135" lengthAdjust="spacing" style="fill:#c9c9c9">Channel Box / Layer Editor</text>
<text transform="translate(1906.500,335) rotate(90)" textLength="80" lengthAdjust="spacing" style="fill:#777">Attribute Editor</text>
<text transform="translate(1906.500,445) rotate(90)" textLength="155" lengthAdjust="spacing" style="fill:#777">XGen Interactive Groom Editor</text>

<rect y="896" width="1920" height="39" fill="#444"/>
<path d="M5 899V932" stroke="#777" stroke-dasharray="1 2"/>
<rect x="13" y="901" width="1612" height="28" fill="#2c2c2c"/>
<rect x="22" y="901" width="11" height="28" fill="#5a5a5a"/>
<text x="26" y="926" class="m" style="fill:#ddd;font-size:12px">1</text>
<g class="tick"><path d="M75 915V929M141.500 915V929M208 915V929M274.500 915V929M341 915V929M407.500 915V929M474 915V929M540.500 915V929M607 915V929M673.500 915V929M740 915V929M806.500 915V929M873 915V929M939.500 915V929M1006 915V929M1072.500 915V929M1139 915V929M1205.500 915V929M1272 915V929M1338.500 915V929M1405 915V929M1471.500 915V929M1538 915V929M1604.500 915V929"/></g>
<g>
<text class="tl" x="79" y="910">5</text><text class="tl" x="149" y="910">10</text><text class="tl" x="215" y="910">15</text><text class="tl" x="282" y="910">20</text><text class="tl" x="348" y="910">25</text><text class="tl" x="415" y="910">30</text><text class="tl" x="481" y="910">35</text><text class="tl" x="548" y="910">40</text><text class="tl" x="614" y="910">45</text><text class="tl" x="681" y="910">50</text><text class="tl" x="747" y="910">55</text><text class="tl" x="814" y="910">60</text><text class="tl" x="880" y="910">65</text><text class="tl" x="947" y="910">70</text><text class="tl" x="1013" y="910">75</text><text class="tl" x="1080" y="910">80</text><text class="tl" x="1146" y="910">85</text><text class="tl" x="1213" y="910">90</text><text class="tl" x="1279" y="910">95</text><text class="tl" x="1349" y="910">100</text><text class="tl" x="1415" y="910">105</text><text class="tl" x="1482" y="910">110</text><text class="tl" x="1548" y="910">115</text><text class="tl" x="1615" y="910">120</text>
</g>
<rect x="1632" y="907" width="88" height="18" rx="2" fill="#2d2d2d"/><text x="1637" y="921" style="font-size:11.500px">1</text>
<g fill="#c9c9c9">
<path d="M1730 909H1732V921H1730ZM1739 909V921L1733 915ZM1746 909V921L1740 915Z"/>
<path d="M1755 909H1757V921H1755ZM1768 908V922L1759 915Z"/>
<path d="M1791 908V922L1782 915Z"/>
<path d="M1813 906V924L1801 915Z"/>
<path d="M1824 906V924L1836 915Z"/>
<path d="M1847 908V922L1855 915Z"/>
<path d="M1871 908V922L1879 915ZM1880 909H1882V921H1880Z"/>
<path d="M1891 909V921L1897 915ZM1898 909V921L1904 915ZM1905 909H1907V921H1905Z"/>
</g>
<path d="M1778.500 905V925" stroke="#d27f3c" stroke-width="2.500" stroke-dasharray="8 2"/><path d="M1858.500 905V925" stroke="#d27f3c" stroke-width="2.500" stroke-dasharray="8 2"/>

<rect y="935" width="1920" height="35" fill="#444"/>
<path d="M5 937V968" stroke="#777" stroke-dasharray="1 2"/>
<rect x="14" y="940" width="88" height="25" rx="2" fill="#2d2d2d"/><rect x="110" y="940" width="88" height="25" rx="2" fill="#2d2d2d"/>
<text x="19" y="957" style="font-size:11.500px">1</text><text x="115" y="957" style="font-size:11.500px">1</text>
<rect x="205" y="940" width="1022" height="25" rx="2" fill="#373737"/>
<rect x="211" y="942" width="612" height="20" rx="4" fill="#5e5e5e"/>
<rect x="215" y="945" width="15" height="14" rx="3" fill="#8f8f8f"/><rect x="808" y="945" width="15" height="14" rx="3" fill="#8f8f8f"/>
<text x="234" y="957" style="font-size:11.500px">1</text><text x="784" y="957" style="font-size:11.500px">120</text>
<rect x="1233" y="940" width="88" height="25" rx="2" fill="#2d2d2d"/><rect x="1329" y="940" width="88" height="25" rx="2" fill="#2d2d2d"/>
<text x="1238" y="957" style="font-size:11.500px">120</text><text x="1334" y="957" style="font-size:11.500px">200</text>
<path class="sp" d="M1422.500 943V963M1695.500 943V963M1848.500 943V963"/>
<path d="M1438 949H1448L1443 954Z" fill="none" stroke="#aaa"/><path d="M1567 949H1577L1572 954Z" fill="none" stroke="#aaa"/>
<rect x="1454.500" y="941.500" width="101" height="23" rx="2" fill="#424242" stroke="#4f4f4f"/><rect x="1583.500" y="941.500" width="101" height="23" rx="2" fill="#424242" stroke="#4f4f4f"/>
<text x="1460" y="957" style="font-size:11.300px">No Character Set</text><text x="1589" y="957" style="font-size:11.300px">No Anim Layer</text>
<rect x="1709" y="942" width="75" height="19" rx="1" fill="#5a5a5a"/><rect x="1785" y="942" width="19" height="19" rx="1" fill="#666"/>
<text x="1713" y="957" style="font-size:11.500px">24 fps</text><path d="M1790 949H1800L1795 954Z" fill="#ccc"/>
<path d="M1821 955V950H1832M1829 947L1833 950L1829 953M1833 951V956H1822M1825 953L1821 956L1825 959" fill="none" stroke="#ccc" stroke-width="1.500"/>
<circle cx="1870" cy="952" r="7.500" fill="none" stroke="#bbb" stroke-width="1.500" stroke-dasharray="9 3"/><path d="M1870 946V957M1865 951H1876" stroke="#d27f3c" stroke-width="1.500"/>
<circle cx="1893" cy="947" r="3" fill="none" stroke="#ccc" stroke-width="1.400"/><circle cx="1902" cy="948" r="2.500" fill="#d27f3c"/><path d="M1901 951L1897 956L1893 960M1901 951L1906 955L1908 961M1901 951L1906 950" stroke="#d27f3c" stroke-width="2.200" fill="none"/>

<rect y="972" width="1920" height="31" fill="#444"/>
<path d="M5 974V1000" stroke="#777" stroke-dasharray="1 2"/>
<text x="24" y="992" style="fill:#d8d8d8">MEL</text>
<rect x="59" y="977" width="664" height="22" rx="2" fill="#2d2d2d"/>
<rect x="731" y="976" width="1156" height="24" rx="2" fill="#2d2d2d"/>
<rect x="1893" y="979" width="18" height="18" fill="#c9c9c9"/><path d="M1893 978H1911" stroke="#c9c9c9" stroke-dasharray="2 1"/><text x="1902" y="993" class="m" style="font-size:10px;fill:#333">{;}</text>

<rect y="1005" width="1920" height="25" fill="#444"/>
<path d="M5 1008V1028" stroke="#777" stroke-dasharray="1 2"/>
<text x="24" y="1022" textLength="118" lengthAdjust="spacingAndGlyphs" style="font-size:10.500px;fill:#bcbcbc">Select Tool: select an object</text>
</svg>
</body></html>
